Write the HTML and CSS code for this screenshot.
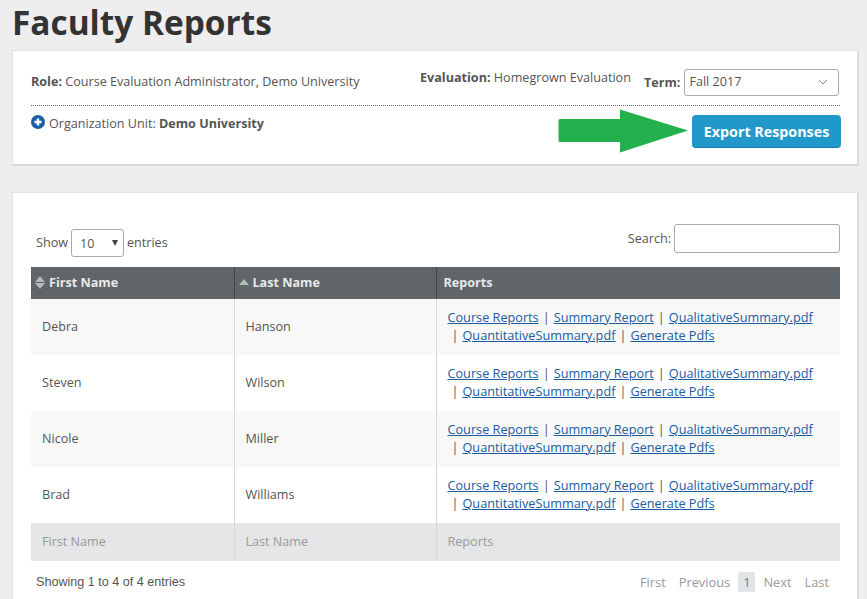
FILE: index.html
```html
<!DOCTYPE html>
<html lang="en">
<head>
    <meta charset="UTF-8">
    <title>Faculty Reports</title>
    <link rel="stylesheet" href="styles.css">
</head>
<body>
    <h1 class="page-title">Faculty Reports</h1>

    <div class="card filter-card">
        <div class="filter-top">
            <div class="role"><b>Role:</b> Course Evaluation Administrator, Demo University</div>
            <div class="evaluation"><b>Evaluation:</b> Homegrown Evaluation</div>
            <div class="term">
                <b>Term:</b>
                <div class="term-select">
                    <span>Fall 2017</span>
                    <svg width="10" height="6" viewBox="0 0 10 6"><path d="M1 1l4 4 4-4" fill="none" stroke="#888" stroke-width="1"/></svg>
                </div>
            </div>
        </div>
        <div class="filter-bottom">
            <div class="org-unit">
                <svg class="plus-icon" width="14" height="14" viewBox="0 0 14 14"><circle cx="7" cy="7" r="7" fill="#1a5fa8"/><path d="M7 3.500v7M3.500 7h7" stroke="#fff" stroke-width="2.400"/></svg>
                <span>Organization Unit: <b>Demo University</b></span>
            </div>
            <button class="export-btn">Export Responses</button>
            <svg class="arrow" width="131" height="44" viewBox="0 0 131 44"><path d="M2 10H62V0.500L130 21.500 62 43.500V33H2a1.500 1.500 0 0 1-1.500-1.500V11.500A1.500 1.500 0 0 1 2 10z" fill="#22b14c"/></svg>
        </div>
    </div>

    <div class="card table-card">
        <div class="table-controls">
            <div class="length">
                <span>Show</span>
                <div class="length-select"><span>10</span><i class="caret"></i></div>
                <span>entries</span>
            </div>
            <div class="search">Search: <div class="search-box"></div></div>
        </div>

        <table class="reports">
            <thead>
                <tr>
                    <th class="col-first"><span class="sort both"></span>First Name</th>
                    <th class="col-last"><span class="sort up"></span>Last Name</th>
                    <th>Reports</th>
                </tr>
            </thead>
            <tbody>
                <tr class="odd">
                    <td>Debra</td>
                    <td>Hanson</td>
                    <td class="links"><a href="#">Course Reports</a><span class="sep">|</span><a href="#">Summary Report</a><span class="sep">|</span><a href="#">QualitativeSummary.pdf</a><br><span class="sep">|</span><a href="#">QuantitativeSummary.pdf</a><span class="sep">|</span><a href="#">Generate Pdfs</a></td>
                </tr>
                <tr>
                    <td>Steven</td>
                    <td>Wilson</td>
                    <td class="links"><a href="#">Course Reports</a><span class="sep">|</span><a href="#">Summary Report</a><span class="sep">|</span><a href="#">QualitativeSummary.pdf</a><br><span class="sep">|</span><a href="#">QuantitativeSummary.pdf</a><span class="sep">|</span><a href="#">Generate Pdfs</a></td>
                </tr>
                <tr class="odd">
                    <td>Nicole</td>
                    <td>Miller</td>
                    <td class="links"><a href="#">Course Reports</a><span class="sep">|</span><a href="#">Summary Report</a><span class="sep">|</span><a href="#">QualitativeSummary.pdf</a><br><span class="sep">|</span><a href="#">QuantitativeSummary.pdf</a><span class="sep">|</span><a href="#">Generate Pdfs</a></td>
                </tr>
                <tr>
                    <td>Brad</td>
                    <td>Williams</td>
                    <td class="links"><a href="#">Course Reports</a><span class="sep">|</span><a href="#">Summary Report</a><span class="sep">|</span><a href="#">QualitativeSummary.pdf</a><br><span class="sep">|</span><a href="#">QuantitativeSummary.pdf</a><span class="sep">|</span><a href="#">Generate Pdfs</a></td>
                </tr>
            </tbody>
            <tfoot>
                <tr>
                    <td>First Name</td>
                    <td>Last Name</td>
                    <td>Reports</td>
                </tr>
            </tfoot>
        </table>

        <div class="table-footer">
            <div class="info">Showing 1 to 4 of 4 entries</div>
            <div class="pager">
                <span>First</span>
                <span class="prev">Previous</span>
                <span class="current">1</span>
                <span class="next">Next</span>
                <span class="last">Last</span>
            </div>
        </div>
    </div>
</body>
</html>
```

FILE: styles.css
```css
* {
    box-sizing: border-box;
}

html, body {
    height: 599px;
    overflow: hidden;
}

body {
    margin: 0;
    padding: 0 8px 0 12px;
    background: #eeeeee;
    color: #555;
    font-family: "Open Sans", sans-serif;
    font-size: 12.6px;
}

b {
    font-weight: 700;
}

.page-title {
    margin: 0;
    height: 50px;
    font-size: 33.400px;
    line-height: 45px;
    font-weight: 700;
    color: #333;
}

.card {
    background: #fff;
    border: 1px solid #e2e2e2;
    border-right: 2px solid #dcdcdc;
    border-bottom: 2px solid #d8d8d8;
    padding: 0 17px 0 18px;
}

.filter-card {
    height: 116px;
    margin-bottom: 26px;
}

.filter-top {
    display: flex;
    height: 55px;
    border-bottom: 1px dotted #666;
    padding-top: 18px;
}

.role {
    padding-top: 4px;
    width: 389px;
}

.evaluation {
    width: 224px;
}

.term {
    display: flex;
    align-items: flex-start;
    gap: 4px;
}

.term b {
    line-height: 27px;
}

.term-select {
    width: 155px;
    height: 27px;
    border: 1px solid #aaa;
    border-radius: 3px;
    padding: 0 10px 2px 4px;
    display: flex;
    align-items: center;
    justify-content: space-between;
}

.filter-bottom {
    position: relative;
    display: flex;
    justify-content: space-between;
    align-items: flex-start;
    padding-top: 9px;
}

.org-unit {
    display: flex;
    align-items: flex-start;
    gap: 4px;
}

.org-unit span {
    line-height: 17px;
}

.export-btn {
    width: 149px;
    height: 33px;
    margin-right: -1px;
    border: none;
    border-bottom: 1px solid #1a7fb0;
    border-radius: 4px;
    background: #2098ca;
    color: #fff;
    font-family: "Open Sans", sans-serif;
    font-size: 14.300px;
    font-weight: 700;
}

.arrow {
    position: absolute;
    left: 527px;
    top: 3px;
}

.table-card {
    height: 407px;
    border-bottom: none;
}

.table-controls {
    display: flex;
    justify-content: space-between;
    height: 74px;
    padding: 31px 0 0 5px;
}

.length {
    display: flex;
    align-items: center;
    gap: 3px;
    height: 28px;
    margin-top: 5px;
}

.length > span {
    padding-bottom: 2px;
}

.length-select {
    width: 53px;
    height: 28px;
    border: 1px solid #aaa;
    border-radius: 3px;
    padding: 0 5px 0 8px;
    display: flex;
    align-items: center;
    justify-content: space-between;
}

.caret {
    border-left: 3px solid transparent;
    border-right: 3px solid transparent;
    border-top: 6px solid #444;
}

.search {
    display: flex;
    align-items: center;
    gap: 3px;
    height: 29px;
}

.search-box {
    width: 166px;
    height: 29px;
    border: 1px solid #aaa;
    border-radius: 3px;
}

.reports {
    width: 809px;
    border-collapse: collapse;
    table-layout: fixed;
}

.col-first {
    width: 203px;
}

.col-last {
    width: 202px;
}

.reports th {
    height: 32px;
    padding: 0 8px 2px 4px;
    background: #5f6568;
    color: #e8e8e8;
    text-align: left;
    font-weight: 700;
    border-right: 1px solid #444;
}

.reports th:last-child {
    padding-left: 7px;
    border-right: none;
}

.sort {
    display: inline-block;
    width: 10px;
    height: 13px;
    margin-right: 4px;
    vertical-align: -2px;
    position: relative;
}

.sort.both::before {
    content: "";
    position: absolute;
    top: 0;
    left: 0;
    border-left: 5px solid transparent;
    border-right: 5px solid transparent;
    border-bottom: 6px solid #b5b8b9;
}

.sort.both::after {
    content: "";
    position: absolute;
    top: 7px;
    left: 0;
    border-left: 5px solid transparent;
    border-right: 5px solid transparent;
    border-top: 6px solid #b5b8b9;
}

.sort.up::before {
    content: "";
    position: absolute;
    top: 3px;
    left: 0;
    border-left: 5px solid transparent;
    border-right: 5px solid transparent;
    border-bottom: 6px solid #b5b8b9;
}

.reports td {
    height: 56px;
    padding: 0 11px;
    border-right: 1px solid #d8d8d8;
    line-height: 18px;
}

.reports td:last-child {
    border-right: none;
}

.reports tbody tr.odd {
    background: #f8f8f8;
}

.reports td.links {
    font-size: 12.700px;
    padding-bottom: 2px;
}

.links a {
    color: #1a5aa0;
}

.sep {
    display: inline-block;
    width: 15px;
    text-align: center;
}

.reports tfoot td {
    height: 38px;
    background: #e5e6e7;
    color: #999;
}

.table-footer {
    display: flex;
    justify-content: space-between;
    align-items: center;
    height: 38px;
    padding: 4px 0 0 5px;
}

.info {
    font-family: "Liberation Sans", sans-serif;
    font-size: 12.6px;
}

.pager {
    display: flex;
    align-items: center;
    padding-right: 11px;
    color: #999;
    font-size: 12.800px;
}

.pager .prev {
    margin-left: 13px;
}

.pager .current {
    margin-left: 8px;
    padding: 0 5px;
    height: 20px;
    line-height: 20px;
    background: #e1e5e8;
    border-radius: 2px;
    color: #777;
}

.pager .next {
    margin-left: 8px;
}

.pager .last {
    margin-left: 13px;
}
```
